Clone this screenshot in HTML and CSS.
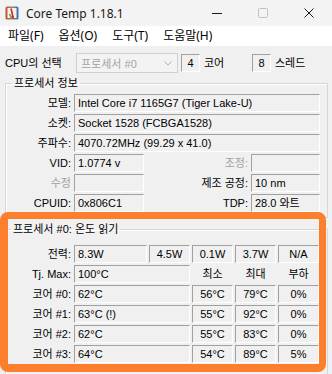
FILE: index.html
```html
<!DOCTYPE html>
<html lang="ko">
<head>
<meta charset="utf-8">
<title>Core Temp 1.18.1</title>
<link rel="stylesheet" href="styles.css">
</head>
<body>
<div class="win">
  <div class="titlebar">
    <svg class="appicon" width="14" height="16" viewBox="0 0 14 16">
      <defs>
        <linearGradient id="fr" x1="0" y1="0" x2="1" y2="0">
          <stop offset="0" stop-color="#c8501e"/>
          <stop offset="0.5" stop-color="#9a8a7a"/>
          <stop offset="1" stop-color="#2f6fb8"/>
        </linearGradient>
      </defs>
      <rect x="0.5" y="1.5" width="13" height="13" rx="1.5" fill="url(#fr)"/>
      <rect x="2.5" y="3" width="9" height="10" fill="#f4f1ea"/>
      <path d="M6 3.5 L8 12" stroke="#d7262b" stroke-width="1.6"/>
      <path d="M4.5 9 L6.5 13" stroke="#3aa54a" stroke-width="1.4"/>
      <circle cx="7.8" cy="12.2" r="1.2" fill="#d7262b"/>
    </svg>
    <span class="title">Core Temp 1.18.1</span>
    <div class="controls">
      <span class="ctl"><svg width="10" height="10" viewBox="0 0 10 10"><path d="M0 5.5H10" stroke="#1b1b1b" stroke-width="1"/></svg></span>
      <span class="ctl"><svg width="10" height="10" viewBox="0 0 10 10"><rect x="0.5" y="0.5" width="9" height="9" rx="1" fill="none" stroke="#c2c2c2"/></svg></span>
      <span class="ctl"><svg width="10" height="10" viewBox="0 0 10 10"><path d="M0.5 0.5L9.5 9.5M9.5 0.5L0.5 9.5" stroke="#1b1b1b" stroke-width="1"/></svg></span>
    </div>
  </div>
  <div class="menubar">
    <span class="mi">파일(F)</span>
    <span class="mi">옵션(O)</span>
    <span class="mi">도구(T)</span>
    <span class="mi">도움말(H)</span>
  </div>
  <div class="content">
    <div class="cpurow">
      <span class="cpulabel">CPU의 선택</span>
      <span class="combo"><span class="combotext">프로세서 #0</span>
        <svg class="chev" width="8" height="5" viewBox="0 0 8 5"><path d="M0.5 0.5L4 4L7.5 0.5" fill="none" stroke="#b0b0b0"/></svg>
      </span>
      <span class="fld num">4</span>
      <span class="unit coreunit">코어</span>
      <span class="fld num">8</span>
      <span class="unit">스레드</span>
    </div>

    <fieldset class="group info">
      <legend>프로세서 정보</legend>
      <div class="infogrid">
        <span class="lbl">모델:</span>
        <span class="fld wide">Intel Core i7 1165G7 (Tiger Lake-U)</span>
        <span class="lbl">소켓:</span>
        <span class="fld wide">Socket 1528 (FCBGA1528)</span>
        <span class="lbl">주파수:</span>
        <span class="fld wide">4070.72MHz (99.29 x 41.0)</span>
        <span class="lbl">VID:</span>
        <span class="fld">1.0774 v</span>
        <span class="lbl dis">조정:</span>
        <span class="fld"></span>
        <span class="lbl dis">수정</span>
        <span class="fld"></span>
        <span class="lbl">제조 공정:</span>
        <span class="fld">10 nm</span>
        <span class="lbl">CPUID:</span>
        <span class="fld">0x806C1</span>
        <span class="lbl">TDP:</span>
        <span class="fld">28.0 와트</span>
      </div>
    </fieldset>

    <fieldset class="group temps">
      <legend>프로세서 #0: 온도 읽기</legend>
      <div class="tempgrid">
        <span class="lbl">전력:</span>
        <span class="fld">8.3W</span>
        <span class="fld c">4.5W</span>
        <span class="fld c">0.1W</span>
        <span class="fld c">3.7W</span>
        <span class="fld c">N/A</span>

        <span class="lbl">Tj. Max:</span>
        <span class="fld span2">100°C</span>
        <span class="hdr">최소</span>
        <span class="hdr">최대</span>
        <span class="hdr">부하</span>

        <span class="lbl">코어 #0:</span>
        <span class="fld span2">62°C</span>
        <span class="fld c">56°C</span>
        <span class="fld c">79°C</span>
        <span class="fld c">0%</span>

        <span class="lbl">코어 #1:</span>
        <span class="fld span2">63°C (!)</span>
        <span class="fld c">55°C</span>
        <span class="fld c">92°C</span>
        <span class="fld c">0%</span>

        <span class="lbl">코어 #2:</span>
        <span class="fld span2">62°C</span>
        <span class="fld c">55°C</span>
        <span class="fld c">83°C</span>
        <span class="fld c">0%</span>

        <span class="lbl">코어 #3:</span>
        <span class="fld span2">64°C</span>
        <span class="fld c">54°C</span>
        <span class="fld c">89°C</span>
        <span class="fld c">5%</span>
      </div>
    </fieldset>
  </div>
  <div class="highlight"></div>
</div>
</body>
</html>
```

FILE: styles.css
```css
* { box-sizing: border-box; }

body {
  margin: 0;
  background: #ffffff;
  font-family: "Liberation Sans", "Noto Sans CJK KR", sans-serif;
  font-size: 11px;
  color: #000;
}

.win {
  position: relative;
  width: 332px;
  height: 374px;
  background: #f0f0f0;
  overflow: hidden;
}

.titlebar {
  height: 26px;
  background: #f3f3f3;
  display: flex;
  align-items: center;
}

.appicon { margin-left: 5px; flex: none; }

.title {
  margin-left: 7px;
  font-family: "Noto Sans", "Noto Sans CJK KR", sans-serif;
  font-size: 12px;
  color: #1a1a1a;
}

.controls {
  margin-left: auto;
  display: flex;
  height: 26px;
}

.ctl {
  width: 46px;
  display: flex;
  align-items: center;
  justify-content: center;
}

.menubar {
  height: 20px;
  background: #ffffff;
  display: flex;
  align-items: center;
  padding-left: 8px;
  gap: 15px;
  font-family: "Noto Sans", "Noto Sans CJK KR", sans-serif;
  font-size: 12px;
  line-height: 16px;
}

.content {
  padding: 7px 4px 0 5px;
}

.cpurow {
  display: flex;
  align-items: center;
  height: 20px;
}

.cpulabel { width: 71px; line-height: 14px; }

.combo {
  width: 102px;
  height: 20px;
  border: 1px solid #d0d0d0;
  background: #f3f3f3;
  display: flex;
  align-items: center;
  padding: 0 5px 0 4px;
  color: #a3a3a3;
}

.combotext { flex: 1; }

.chev { flex: none; }

.fld {
  height: 18px;
  border: 1px solid;
  border-color: #a0a0a0 #ffffff #ffffff #a0a0a0;
  background: #f0f0f0;
  display: flex;
  align-items: center;
  padding-left: 3px;
  white-space: nowrap;
  overflow: hidden;
  line-height: 14px;
}

.num {
  width: 19px;
  justify-content: center;
  padding-left: 0;
  margin-left: 3px;
}

.unit { margin-left: 4px; line-height: 14px; }

.coreunit { width: 45px; }

.group {
  margin: 0;
  padding: 0;
  min-width: 0;
  border: 1px solid #d6d6d6;
  box-shadow: inset 1px 1px 0 #ffffff;
}

.group legend {
  padding: 0 2px;
  line-height: 12px;
  font-size: 11px;
}

.info {
  margin-top: 4px;
  padding: 5px 7px 5px 0;
}

.info legend { margin-left: 6px; }

.temps {
  margin-top: 5px;
  padding: 10px 8px 12px 0;
}

.temps legend { margin-left: 5px; }

.infogrid {
  display: grid;
  grid-template-columns: 66px 70px 1fr 69px;
  grid-auto-rows: 18px;
  gap: 2px;
}

.wide { grid-column: 2 / 5; }

.lbl {
  display: flex;
  align-items: center;
  justify-content: flex-end;
  padding-right: 1px;
  white-space: nowrap;
  line-height: 14px;
}

.dis { color: #a0a0a0; }

.tempgrid {
  display: grid;
  grid-template-columns: 66px 73px 41px 41px 41px 41px;
  grid-auto-rows: 18px;
  gap: 2px;
}

.span2 { grid-column: span 2; }

.c { justify-content: center; padding-left: 0; }

.hdr {
  display: flex;
  align-items: center;
  justify-content: center;
  line-height: 14px;
}

.highlight {
  position: absolute;
  left: 0;
  top: 212px;
  width: 326px;
  height: 160px;
  border: 7px solid #fb7f2c;
  border-left-width: 8px;
  border-bottom-width: 8px;
  border-radius: 8px;
}
```
